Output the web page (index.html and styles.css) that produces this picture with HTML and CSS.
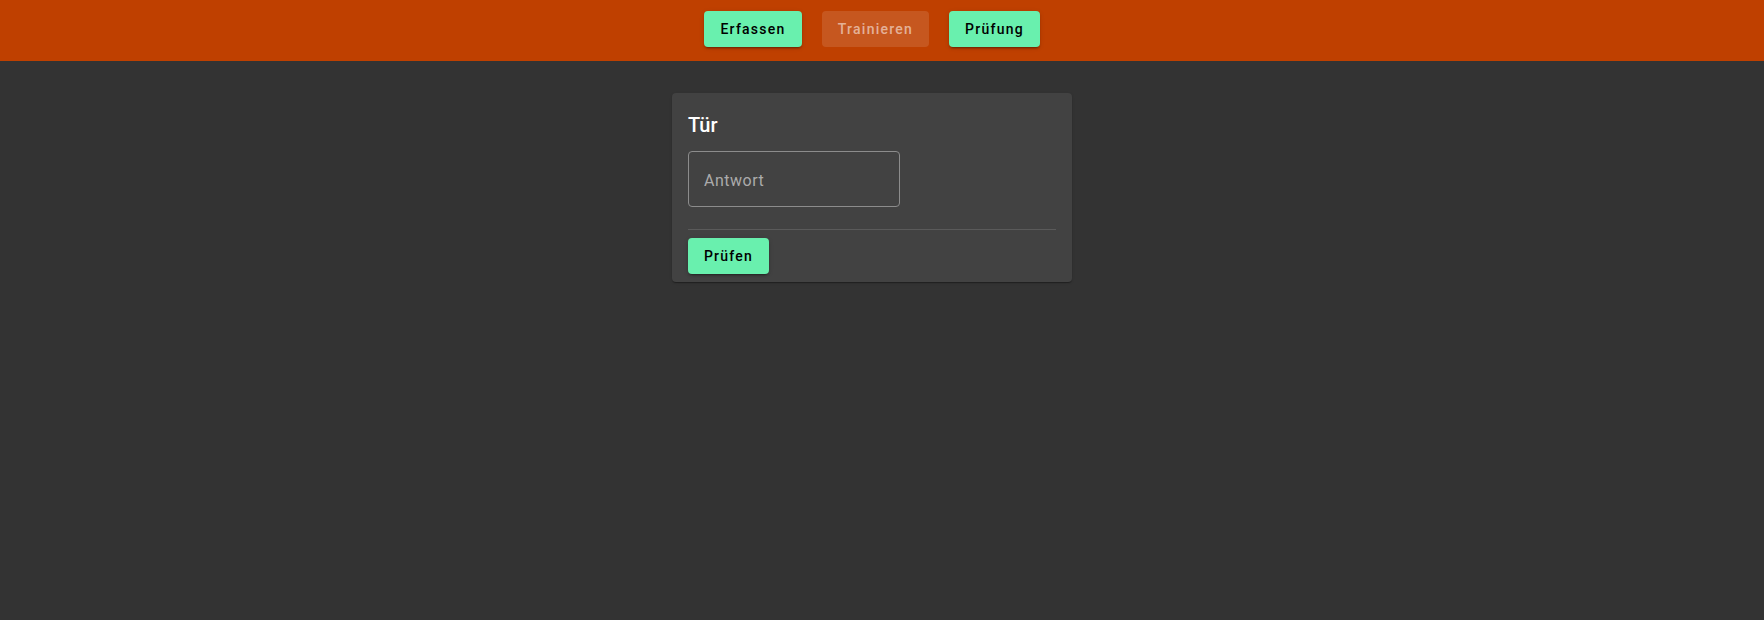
FILE: index.html
```html
<!DOCTYPE html>
<html lang="de">
<head>
<meta charset="utf-8">
<title>Prüfung</title>
<link rel="stylesheet" href="styles.css">
</head>
<body>
<header class="toolbar">
  <nav class="nav">
    <button class="btn btn-green nav-erfassen">Erfassen</button>
    <button class="btn btn-disabled nav-trainieren" disabled>Trainieren</button>
    <button class="btn btn-green nav-pruefung">Prüfung</button>
  </nav>
</header>
<main class="content">
  <section class="card">
    <h2 class="card-title">Tür</h2>
    <div class="field">
      <input class="field-input" type="text" placeholder="Antwort">
    </div>
    <hr class="divider">
    <div class="card-actions">
      <button class="btn btn-green btn-check">Prüfen</button>
    </div>
  </section>
</main>
</body>
</html>
```

FILE: styles.css
```css
* { box-sizing: border-box; }

html, body {
  margin: 0;
  padding: 0;
  height: 100%;
}

body {
  background: #333333;
  font-family: Roboto, "Liberation Sans", sans-serif;
  color: #ffffff;
}

.toolbar {
  height: 61px;
  background: #bf4000;
  padding: 11px 20px 0 0;
}

.nav {
  display: flex;
  justify-content: center;
  gap: 20px;
}

.btn {
  font-family: Roboto, "Liberation Sans", sans-serif;
  font-size: 14px;
  font-weight: 500;
  letter-spacing: 1.25px;
  height: 36px;
  border: none;
  border-radius: 4px;
  padding: 0 8px;
  cursor: pointer;
}

.btn-green {
  background: #69f0ae;
  color: #000000;
  box-shadow: 0 3px 1px -2px rgba(0,0,0,.2), 0 2px 2px 0 rgba(0,0,0,.14), 0 1px 5px 0 rgba(0,0,0,.12);
}

.btn-disabled {
  background: rgba(255,255,255,0.12);
  color: rgba(255,255,255,0.55);
  cursor: default;
}

.nav-erfassen { width: 98px; }
.nav-trainieren { width: 107px; }
.nav-pruefung { width: 91px; }

.content {
  display: flex;
  justify-content: center;
  padding: 32px 20px 0 0;
}

.card {
  width: 400px;
  background: #424242;
  border-radius: 4px;
  padding: 16px 16px 8px;
  box-shadow: 0 2px 1px -1px rgba(0,0,0,.2), 0 1px 1px 0 rgba(0,0,0,.14), 0 1px 3px 0 rgba(0,0,0,.12);
  display: flex;
  flex-direction: column;
}

.card-title {
  margin: 0;
  font-size: 20px;
  font-weight: 500;
  line-height: 32px;
  color: #ffffff;
}

.field {
  margin-top: 10px;
  width: 212px;
}

.field-input {
  width: 100%;
  height: 56px;
  background: transparent;
  border: 1px solid #8c8c8c;
  border-radius: 4px;
  padding: 2px 15px 0;
  font-family: Roboto, "Liberation Sans", sans-serif;
  font-size: 16px;
  letter-spacing: 0.5px;
  color: #ffffff;
  outline: none;
}

.field-input::placeholder {
  color: #ababab;
}

.divider {
  margin: 22px 0 0;
  border: none;
  border-top: 1px solid #5a5a5a;
  height: 0;
}

.card-actions {
  display: flex;
  margin-top: 8px;
}

.btn-check { width: 81px; }
```
